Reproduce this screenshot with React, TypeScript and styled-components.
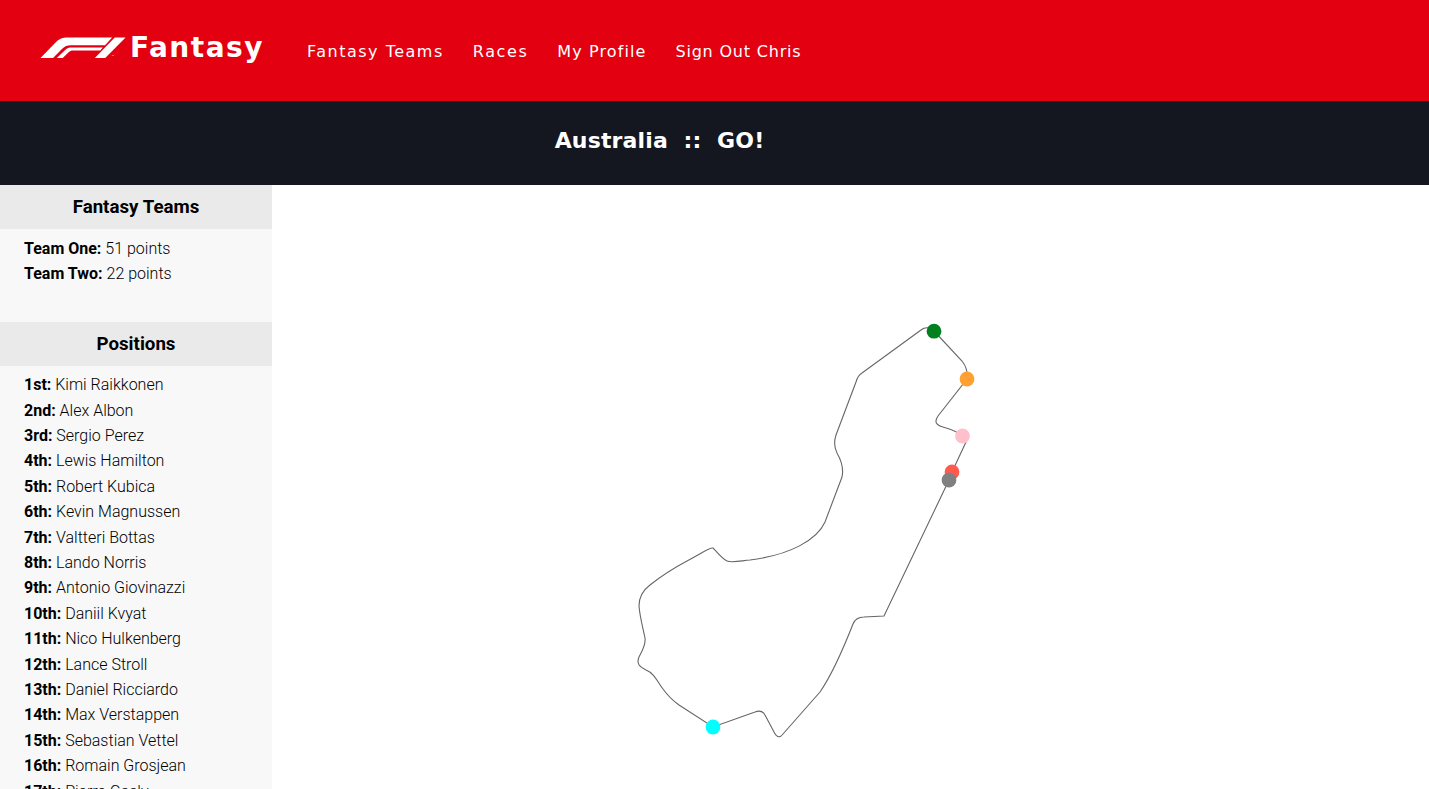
import React from 'react';
import styled, { createGlobalStyle } from 'styled-components';

const GlobalStyle = createGlobalStyle`
  html, body {
    margin: 0;
    padding: 0;
    background: #fff;
  }
  body {
    font-family: Roboto, "Liberation Sans", sans-serif;
    font-size: 16px;
    font-weight: 300;
    color: #000;
  }
`;

const Page = styled.div`
  height: 100vh;
  overflow: hidden;
  display: flex;
  flex-direction: column;
`;

const Header = styled.header`
  flex: none;
  height: 101px;
  background: #e30010;
  display: flex;
  align-items: center;
  padding-left: 40px;
`;

const Logo = styled.a`
  display: flex;
  align-items: center;
  gap: 4px;
  margin: 0 43px 6px 0;
  width: 224px;
  color: #fff;
`;

const LogoText = styled.span`
  font-family: "DejaVu Sans", sans-serif;
  font-weight: 700;
  font-size: 28px;
  line-height: 30px;
  letter-spacing: 1.5px;
`;

const Nav = styled.nav`
  display: flex;
  gap: 29px;
  padding-top: 2px;
`;

const NavLink = styled.a<{ $tracking: number }>`
  font-family: "DejaVu Sans", sans-serif;
  font-size: 16px;
  font-weight: 400;
  letter-spacing: ${(p) => p.$tracking}px;
  color: #fff;
  white-space: nowrap;
`;

const TitleBar = styled.div`
  flex: none;
  height: 84px;
  background: #141620;
  display: flex;
  align-items: center;
  justify-content: center;
  padding: 0 110px 6px 0;
  box-sizing: border-box;
`;

const Title = styled.h1`
  margin: 0;
  font-family: "DejaVu Sans", sans-serif;
  font-size: 22px;
  font-weight: 700;
  letter-spacing: 0.15px;
  white-space: pre;
  color: #fff;
`;

const Body = styled.div`
  flex: 1;
  min-height: 0;
  display: flex;
`;

const Sidebar = styled.aside`
  flex: none;
  width: 272px;
  background: #f8f8f8;
`;

const SectionTitle = styled.h2`
  margin: 0;
  height: 44px;
  line-height: 44px;
  background: #eaeaea;
  text-align: center;
  font-size: 18.72px;
  font-weight: 700;
`;

const Rows = styled.ul<{ $top: number; $gapBelow: number }>`
  list-style: none;
  margin: 0;
  padding: ${(p) => p.$top}px 0 ${(p) => p.$gapBelow}px 24px;
`;

const Row = styled.li`
  line-height: 25.4px;
  white-space: nowrap;
`;

const Label = styled.strong`
  font-weight: 700;
`;

const Main = styled.main`
  flex: 1;
  min-width: 0;
`;

const TrackSvg = styled.svg`
  display: block;
`;

const navLinks = [
  { label: 'Fantasy Teams', tracking: 1.5 },
  { label: 'Races', tracking: 1.6 },
  { label: 'My Profile', tracking: 1.1 },
  { label: 'Sign Out Chris', tracking: 0.8 },
];

const teams = [
  ['Team One:', '51 points'],
  ['Team Two:', '22 points'],
];

const drivers = [
  'Kimi Raikkonen',
  'Alex Albon',
  'Sergio Perez',
  'Lewis Hamilton',
  'Robert Kubica',
  'Kevin Magnussen',
  'Valtteri Bottas',
  'Lando Norris',
  'Antonio Giovinazzi',
  'Daniil Kvyat',
  'Nico Hulkenberg',
  'Lance Stroll',
  'Daniel Ricciardo',
  'Max Verstappen',
  'Sebastian Vettel',
  'Romain Grosjean',
  'Pierre Gasly',
];

const ordinal = (n: number) => {
  if (n === 1) return '1st';
  if (n === 2) return '2nd';
  if (n === 3) return '3rd';
  return `${n}th`;
};

// order matters: the grey car sits on top of the red one
const cars = [
  { x: 934, y: 331.2, color: '#00801f' },
  { x: 967, y: 379, color: '#ffa033' },
  { x: 962.5, y: 436, color: '#ffc0cb' },
  { x: 952, y: 472, color: '#ff5a4d' },
  { x: 949, y: 480, color: '#808080' },
  { x: 713, y: 727, color: '#00ffff' },
];

const trackPath = `
  M934 331
  C931 328 926 326 921 330
  L862 373
  C859 375 857 378 856 382
  L836 435
  C834 441 834 447 837 453
  C841 460 844 468 842 477
  L825 522
  C817 540 790 555 750 560
  C740 561 732 563 727 561
  C722 559 716 551 713 548
  C710 547 704 552 687 561
  C672 569 660 577 650 585
  C642 591 639 597 639 606
  C640 618 643 628 645 638
  C646 645 642 651 639 657
  C636 664 640 667 646 670
  C654 673 657 681 663 689
  C668 696 672 700 679 705
  L713 727
  L755 712
  C760 710 763 711 765 715
  L774 732
  C777 738 780 738 783 734
  L820 692
  C831 676 842 652 853 624
  C855 619 858 617 864 617
  L884 616
  L949 480
  L952 472
  L966 442
  L962 436
  C957 431 950 429 943 427
  C936 425 934 422 938 416
  L967 379
  C968 371 966 366 962 361
  L934 331
  Z
`;

const App: React.FC = () => {
  return (
    <Page>
      <GlobalStyle />
      <Header>
        <Logo>
          <svg width="87" height="22" viewBox="0 0 87 22" aria-hidden="true">
            <path
              fill="#fff"
              d="M0.5 21 L16 5.2 C19.5 1.6 23 0.4 28 0.4 L73 0.4 L65.8 8.2 L31 8.2 C27.5 8.2 25 9.2 22.5 11.8 L13.2 21 Z"
            />
            <path
              fill="#fff"
              d="M17 21 L25.5 13 C27.5 11.2 29.5 10.6 32 10.6 L63.6 10.6 L60.9 13.6 L33 13.6 C31.5 13.6 30.3 14.1 29 15.3 L23 21 Z"
            />
            <path fill="#fff" d="M86.6 0.4 L75.6 0.4 L55.5 21 L66 21 Z" />
            <text x="72.5" y="21" fill="#fff" fontSize="4" fontFamily="Roboto, sans-serif">
              ™
            </text>
          </svg>
          <LogoText>Fantasy</LogoText>
        </Logo>
        <Nav>
          {navLinks.map((link) => (
            <NavLink key={link.label} $tracking={link.tracking}>
              {link.label}
            </NavLink>
          ))}
        </Nav>
      </Header>
      <TitleBar>
        <Title>{'Australia  ::  GO!'}</Title>
      </TitleBar>
      <Body>
        <Sidebar>
          <SectionTitle>Fantasy Teams</SectionTitle>
          <Rows $top={6.6} $gapBelow={35.6}>
            {teams.map(([name, points]) => (
              <Row key={name}>
                <Label>{name}</Label> {points}
              </Row>
            ))}
          </Rows>
          <SectionTitle>Positions</SectionTitle>
          <Rows $top={6.2} $gapBelow={0}>
            {drivers.map((driver, i) => (
              <Row key={driver}>
                <Label>{ordinal(i + 1)}:</Label> {driver}
              </Row>
            ))}
          </Rows>
        </Sidebar>
        <Main>
          <TrackSvg width="1157" height="604" viewBox="272 185 1157 604">
            <path d={trackPath} fill="none" stroke="#666" strokeWidth="1.1" />
            {cars.map((car) => (
              <circle key={car.color} cx={car.x} cy={car.y} r="7.4" fill={car.color} />
            ))}
          </TrackSvg>
        </Main>
      </Body>
    </Page>
  );
};

export default App;
